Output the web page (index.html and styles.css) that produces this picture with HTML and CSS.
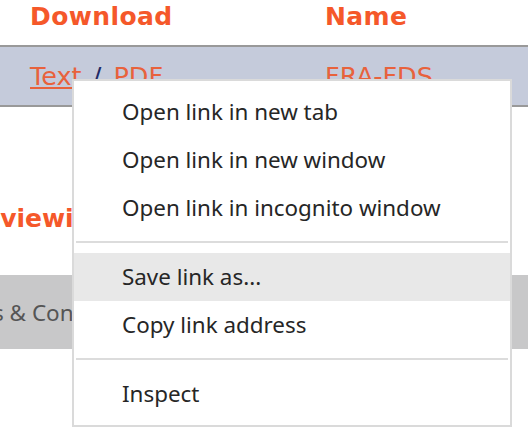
FILE: index.html
```html
<!DOCTYPE html>
<html lang="en">
<head>
<meta charset="utf-8">
<title>Downloads</title>
<link rel="stylesheet" href="styles.css">
</head>
<body>
<div class="page">
  <div class="table">
    <div class="row head">
      <div class="cell">Download</div>
      <div class="cell">Name</div>
    </div>
    <div class="row data">
      <div class="cell"><a class="link" href="#">Text</a> <span class="sep">/</span> <span class="plain">PDF</span></div>
      <div class="cell"><span class="plain">FRA-FDS</span></div>
    </div>
  </div>
  <h2 class="heading">Reviewing documents</h2>
  <div class="band"><span class="band-text">Terms &amp; Conditions</span></div>
</div>

<div class="menu">
  <div class="item">Open link in new tab</div>
  <div class="item">Open link in new window</div>
  <div class="item">Open link in incognito window</div>
  <div class="divider"></div>
  <div class="item hover">Save link as...</div>
  <div class="item">Copy link address</div>
  <div class="divider"></div>
  <div class="item">Inspect</div>
</div>
</body>
</html>
```
FILE: styles.css
```css
html, body {
  margin: 0;
  padding: 0;
  background: #ffffff;
  overflow: hidden;
}
body {
  width: 528px;
  height: 445px;
  position: relative;
  font-family: "DejaVu Sans", Verdana, sans-serif;
}
.page {
  width: 528px;
  overflow: hidden;
}
.row {
  display: grid;
  grid-template-columns: 295px 1fr;
  padding-left: 30px;
  line-height: 28px;
  white-space: nowrap;
}
.head {
  font-weight: bold;
  font-size: 25px;
  letter-spacing: 0.4px;
  color: #f5582a;
  padding-top: 3px;
  padding-bottom: 14px;
}
.data {
  border-top: 2px solid #999999;
  border-bottom: 2px solid #999999;
  background: #c5cbdb;
  font-size: 25.5px;
  padding-top: 15px;
  padding-bottom: 15px;
}
.link {
  color: #e8623c;
  text-decoration: underline;
}
.plain {
  color: #e8623c;
}
.sep {
  color: #1f2a66;
  margin: 0 4px 0 3px;
}
.heading {
  margin: 98px 0 0 -36px;
  font-size: 25px;
  line-height: 28px;
  font-weight: bold;
  color: #f5582a;
  white-space: nowrap;
}
.band {
  margin-top: 42px;
  background: #c8c8c9;
  padding: 24px 0 22px 0;
  line-height: 28px;
  font-family: "Noto Sans", "Open Sans", sans-serif;
  font-size: 22.5px;
  color: #555555;
  white-space: nowrap;
}
.band-text {
  display: inline-block;
  margin-left: -61px;
}
.menu {
  position: absolute;
  left: 72px;
  top: 79px;
  width: 436px;
  border: 2px solid #dadada;
  background: #ffffff;
  padding: 7px 0;
  font-family: "Noto Sans", "Open Sans", sans-serif;
  font-size: 22.4px;
  color: #262626;
}
.item {
  height: 48px;
  line-height: 48px;
  padding-left: 48px;
  white-space: nowrap;
}
.item.hover {
  background: #e8e8e8;
}
.divider {
  height: 2px;
  margin: 9px 2px 10px 2px;
  background: #dcdcdc;
}
```
